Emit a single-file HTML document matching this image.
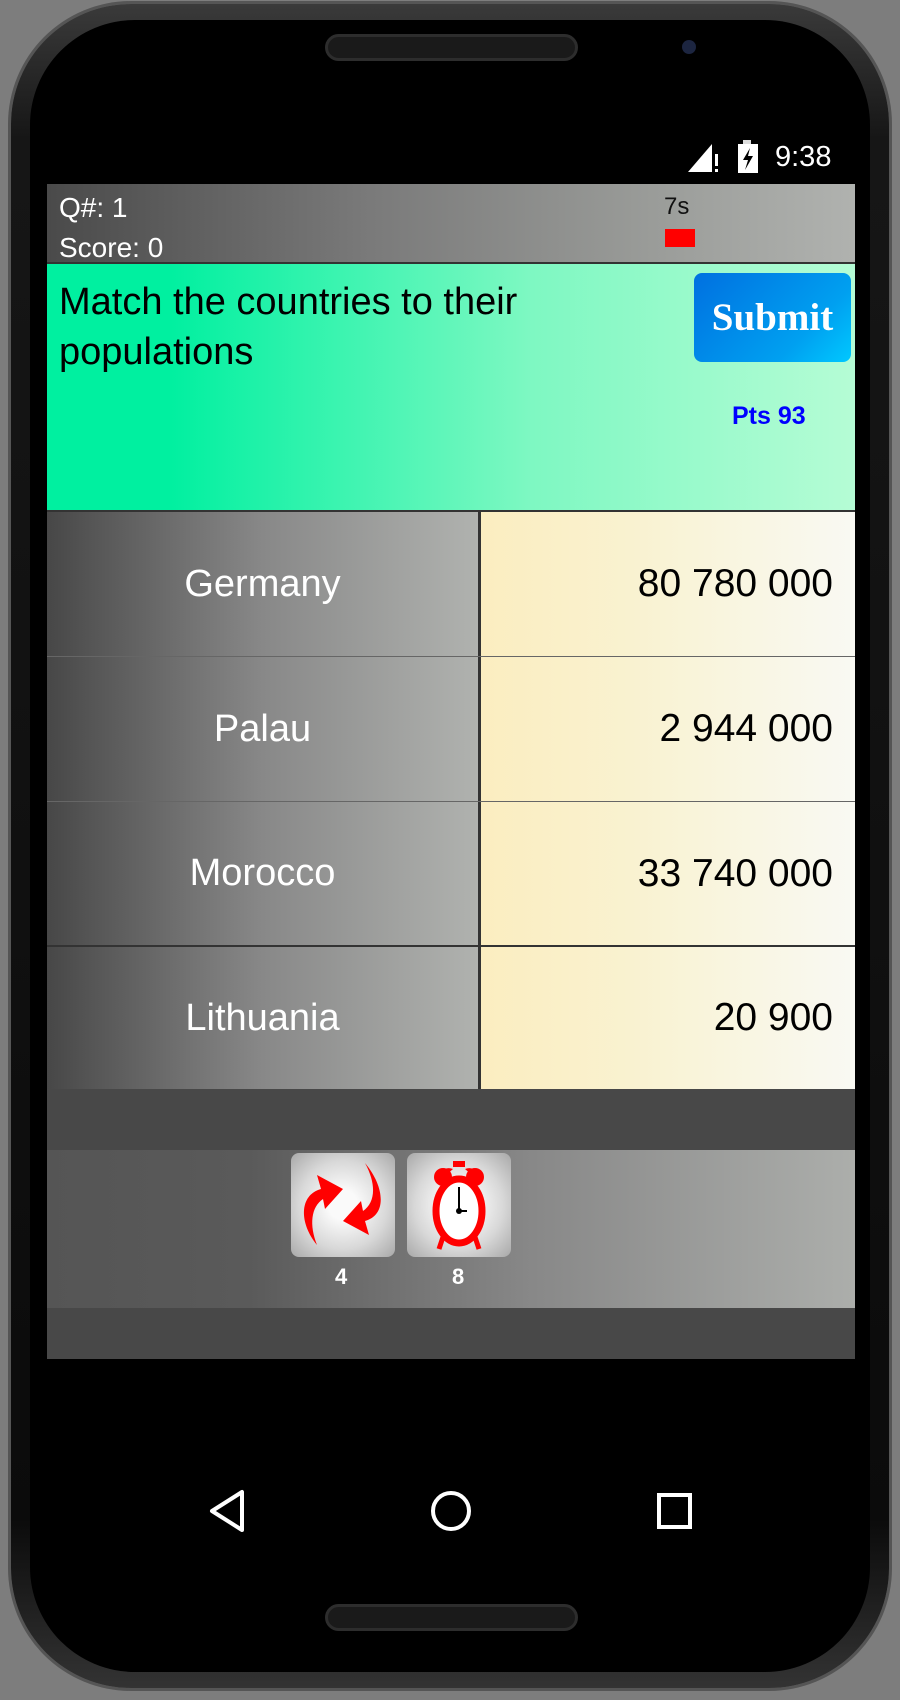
<!DOCTYPE html>
<html><head><meta charset="utf-8"><style>
*{margin:0;padding:0;box-sizing:border-box}
body{width:900px;height:1700px;background:#7d7d7d;position:relative;overflow:hidden;font-family:"Liberation Sans",sans-serif}
.phone{position:absolute;left:11px;top:4px;width:878px;height:1684px;border-radius:120px;background:linear-gradient(#3a3a3a,#161616 8%,#0b0b0b 90%,#333);box-shadow:0 0 0 3px #555}
.spk{position:absolute;left:325px;width:253px;height:27px;border-radius:14px;background:#1a1a1a;border:3px solid #2d2d2d}
.abs{position:absolute}
.screen{position:absolute;left:47px;width:808px}
.c{width:431px;background:linear-gradient(90deg,#474747,#555 10%,#888 50%,#b0b2af);color:#fff;font-size:38px;display:flex;align-items:center;justify-content:center}
.n{flex:1;background:linear-gradient(90deg,#fbedc0,#f9f2d0 40%,#f9f9f3);font-size:39px;display:flex;align-items:center;justify-content:flex-end;padding-right:22px}
</style></head><body>
<div class="phone"></div>
<div class="abs" style="left:30px;top:20px;width:840px;height:1652px;border-radius:105px;background:#000"></div>
<div class="spk" style="top:34px"></div>
<div class="abs" style="left:682px;top:40px;width:14px;height:14px;border-radius:50%;background:#1c2540"></div>
<div class="spk" style="top:1604px"></div>
<div class="screen" style="top:130px;height:54px;background:#000"></div>
<svg class="abs" style="left:686px;top:140px" width="36" height="34"><polygon points="2,32 26,4 26,32" fill="#fff"/><rect x="29" y="14" width="3" height="12" fill="#fff"/><rect x="29" y="29" width="3" height="3" fill="#fff"/></svg>
<svg class="abs" style="left:736px;top:140px" width="24" height="34"><rect x="7" y="0" width="8" height="4" fill="#ddd"/><rect x="2" y="4" width="20" height="29" fill="#fff"/><polygon points="14,8 7,20 12,20 9,30 17,16 12,16" fill="#000"/></svg>
<div class="abs" style="left:775px;top:141px;color:#fff;font-size:29px">9:38</div>
<div class="screen" style="top:184px;height:78px;background:linear-gradient(90deg,#4a4a4a,#7a7a7a 40%,#9a9c99 75%,#b0b2af)"></div>
<div class="abs" style="left:59px;top:192px;color:#fff;font-size:28px">Q#: 1</div>
<div class="abs" style="left:59px;top:232px;color:#fff;font-size:28px;height:30px;overflow:hidden">Score: 0</div>
<div class="abs" style="left:664px;top:193px;color:#111;font-size:24px">7s</div>
<div class="abs" style="left:665px;top:229px;width:30px;height:18px;background:#f00"></div>
<div class="screen" style="top:262px;height:248px;background:linear-gradient(90deg,#00f0a0 0%,#00f0a0 15%,#7ef8c2 60%,#b5fcd5);border-top:2px solid #333"></div>
<div class="abs" style="left:59px;top:277px;color:#000;font-size:38px;line-height:50px;width:580px">Match the countries to their populations</div>
<div class="abs" style="left:694px;top:273px;width:157px;height:89px;border-radius:8px;background:linear-gradient(135deg,#0070e0,#00a0f0 70%,#00c8ff);color:#fff;font-family:'Liberation Serif',serif;font-weight:bold;font-size:39px;text-align:center;line-height:89px">Submit</div>
<div class="abs" style="left:732px;top:402px;color:#0000ff;font-weight:bold;font-size:25px">Pts 93</div>
<div class="screen" style="top:510px;height:579px;border-top:2px solid #333">
<div style="display:flex;flex-direction:column;height:100%">
 <div style="display:flex;height:145px;border-bottom:1px solid #666"><div class="c">Germany</div><div style="width:3px;background:#333"></div><div class="n">80 780 000</div></div>
 <div style="display:flex;height:145px;border-bottom:1px solid #666"><div class="c">Palau</div><div style="width:3px;background:#333"></div><div class="n">2 944 000</div></div>
 <div style="display:flex;height:145px;border-bottom:2px solid #333"><div class="c">Morocco</div><div style="width:3px;background:#333"></div><div class="n">33 740 000</div></div>
 <div style="display:flex;flex:1"><div class="c">Lithuania</div><div style="width:3px;background:#333"></div><div class="n">20 900</div></div>
</div></div>
<div class="screen" style="top:1089px;height:61px;background:#484848"></div>
<div class="screen" style="top:1150px;height:158px;background:linear-gradient(90deg,#555,#5a5a5a 25%,#888 60%,#acaeab)"></div>
<div class="screen" style="top:1308px;height:51px;background:#484848"></div>
<div class="abs" style="left:291px;top:1153px;width:104px;height:104px;border-radius:8px;background:radial-gradient(circle,#fafafa 20%,#d8d8d8 60%,#a8a8a8)"></div>
<svg class="abs" style="left:291px;top:1153px" width="104" height="104"><path d="M26,92 C8,70 8,42 30,36 L26,22 L52,36 L34,56 L32,46 C20,54 18,72 26,92Z" fill="#f00"/><path d="M74,10 C94,34 96,62 74,68 L78,82 L52,68 L70,48 L72,58 C84,50 86,32 74,10Z" fill="#f00"/></svg>
<div class="abs" style="left:407px;top:1153px;width:104px;height:104px;border-radius:8px;background:radial-gradient(circle,#fafafa 20%,#d8d8d8 60%,#a8a8a8)"></div>
<svg class="abs" style="left:407px;top:1153px" width="104" height="104"><path d="M30,30 A12,12 0 0 1 46,16 Z" fill="#f00"/><path d="M74,30 A12,12 0 0 0 58,16 Z" fill="#f00"/><circle cx="36" cy="24" r="9" fill="#f00"/><circle cx="68" cy="24" r="9" fill="#f00"/><rect x="46" y="8" width="12" height="6" fill="#f00"/><ellipse cx="52" cy="58" rx="23" ry="32" fill="#fff" stroke="#f00" stroke-width="7"/><path d="M36,84 L32,96 M68,84 L72,96" stroke="#f00" stroke-width="5"/><line x1="52" y1="34" x2="52" y2="58" stroke="#000" stroke-width="2"/><line x1="52" y1="58" x2="60" y2="58" stroke="#000" stroke-width="2"/><circle cx="52" cy="58" r="3" fill="#000"/></svg>
<div class="abs" style="left:335px;top:1264px;color:#fff;font-weight:bold;font-size:22px">4</div>
<div class="abs" style="left:452px;top:1264px;color:#fff;font-weight:bold;font-size:22px">8</div>
<svg class="abs" style="left:200px;top:1480px" width="500" height="60"><polygon points="42,12 42,50 12,31" fill="none" stroke="#fff" stroke-width="4" stroke-linejoin="round"/><circle cx="251" cy="31" r="18" fill="none" stroke="#fff" stroke-width="4"/><rect x="459" y="15" width="31" height="32" fill="none" stroke="#fff" stroke-width="4"/></svg>
</body></html>
